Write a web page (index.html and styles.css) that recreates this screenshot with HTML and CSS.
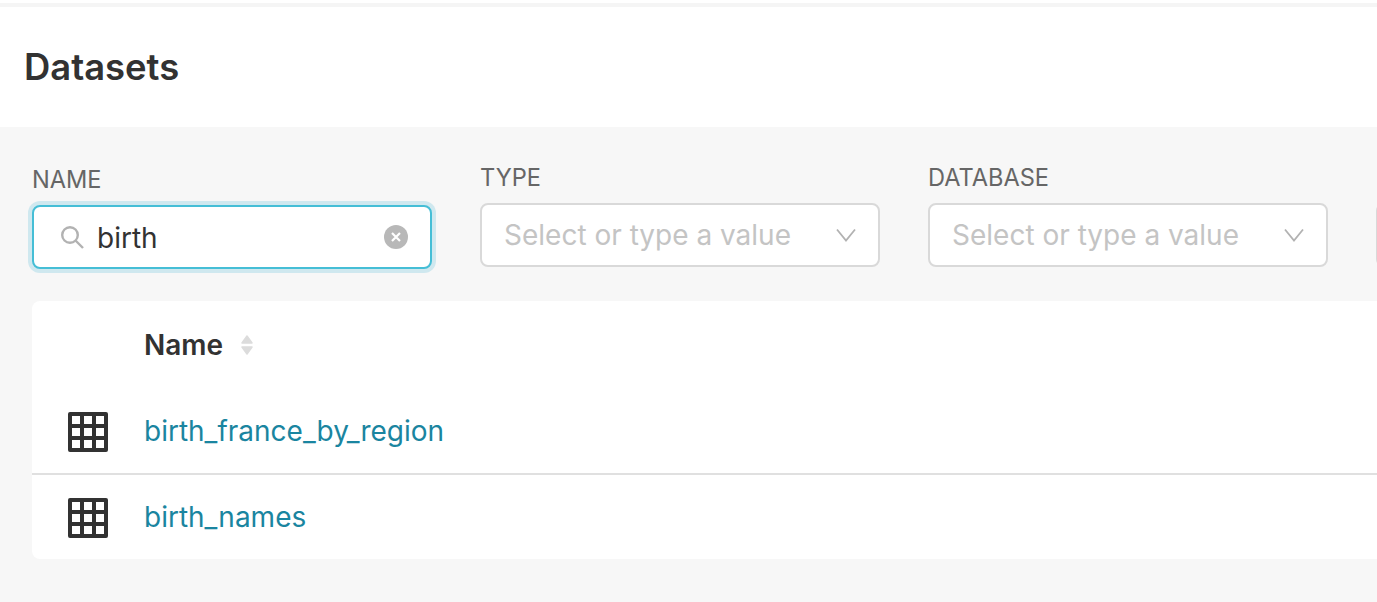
FILE: index.html
```html
<!DOCTYPE html>
<html>
	<head>
		<meta charset="utf-8">
		<title>Datasets</title>
		<link rel="stylesheet" href="styles.css">
	</head>
	<body>
		<div class="top-strip"></div>
		<div class="title-bar">
			<h1>Datasets</h1>
		</div>
		<div class="content">
			<div class="filters">
				<div class="filter filter-name">
					<label>NAME</label>
					<div class="search-box">
						<svg class="search-icon" width="24" height="24" viewBox="0 0 24 24" fill="none" stroke="#b2b2b2" stroke-width="2.4"><circle cx="10" cy="10" r="7.800"/><path d="M15.500 15.500l7.500 7.500"/></svg>
						<span class="search-text">birth</span>
						<svg class="clear-icon" width="24" height="24" viewBox="0 0 24 24"><circle cx="12" cy="12" r="12" fill="#b8b8b8"/><path d="M8 8l8 8M16 8l-8 8" stroke="#fff" stroke-width="2.2"/></svg>
					</div>
				</div>
				<div class="filter">
					<label>TYPE</label>
					<div class="select-box">
						<span class="placeholder">Select or type a value</span>
						<svg width="20" height="14" viewBox="0 0 20 14" fill="none" stroke="#b2b2b2" stroke-width="1.8"><path d="M1 1.500l9 11 9-11"/></svg>
					</div>
				</div>
				<div class="filter">
					<label>DATABASE</label>
					<div class="select-box">
						<span class="placeholder">Select or type a value</span>
						<svg width="20" height="14" viewBox="0 0 20 14" fill="none" stroke="#b2b2b2" stroke-width="1.8"><path d="M1 1.500l9 11 9-11"/></svg>
					</div>
				</div>
				<div class="filter">
					<label>&nbsp;</label>
					<div class="select-box"></div>
				</div>
			</div>
			<div class="table">
				<div class="table-head">
					<span class="col-name">Name</span>
					<svg class="sort-icon" width="12" height="20" viewBox="0 0 12 20" fill="#dcdcdc" stroke="#dcdcdc" stroke-width="1.500" stroke-linejoin="round"><path d="M6 1l5 7H1z"/><path d="M6 19l-5-7h10z"/></svg>
				</div>
				<div class="table-row">
					<svg class="table-icon" width="40" height="40" viewBox="0 0 40 40"><path fill="#323232" fill-rule="evenodd" d="M2 0h36a2 2 0 0 1 2 2v36a2 2 0 0 1-2 2H2a2 2 0 0 1-2-2V2a2 2 0 0 1 2-2zM4 4v8h8V4zM16 4v8h8V4zM28 4v8h8V4zM4 16v8h8v-8zM16 16v8h8v-8zM28 16v8h8v-8zM4 28v8h8v-8zM16 28v8h8v-8zM28 28v8h8v-8z"/></svg>
					<a href="#">birth_france_by_region</a>
				</div>
				<div class="table-row">
					<svg class="table-icon" width="40" height="40" viewBox="0 0 40 40"><path fill="#323232" fill-rule="evenodd" d="M2 0h36a2 2 0 0 1 2 2v36a2 2 0 0 1-2 2H2a2 2 0 0 1-2-2V2a2 2 0 0 1 2-2zM4 4v8h8V4zM16 4v8h8V4zM28 4v8h8V4zM4 16v8h8v-8zM16 16v8h8v-8zM28 16v8h8v-8zM4 28v8h8v-8zM16 28v8h8v-8zM28 28v8h8v-8z"/></svg>
					<a href="#">birth_names</a>
				</div>
			</div>
		</div>
	</body>
</html>
```

FILE: styles.css
```css
html, body {
	margin: 0;
	padding: 0;
	height: 100%;
	overflow: hidden;
}

body {
	background-color: #fff;
	font-family: Inter, "Liberation Sans", sans-serif;
	color: #323232;
}

.top-strip {
	height: 4px;
	margin-top: 3px;
	background-color: #f5f5f5;
}

/* title */
.title-bar {
	height: 120px;
	padding-left: 24px;
	display: flex;
	align-items: center;
	background-color: #fff;
}

.title-bar h1 {
	margin: 0;
	font-size: 36.4px;
	font-weight: 600;
	line-height: 40px;
}

/* filters */
.content {
	height: 475px;
	padding-left: 32px;
	background-color: #f7f7f7;
	overflow: hidden;
}

.filters {
	display: flex;
	gap: 48px;
	padding-top: 36px;
	height: 174px;
	box-sizing: border-box;
}

.filter {
	flex: none;
	width: 400px;
}

.filter label {
	display: block;
	height: 40px;
	font-size: 23.6px;
	line-height: 30px;
	color: #666;
}

.filter-name {
	margin-top: 2px;
}

.search-box {
	display: flex;
	align-items: center;
	box-sizing: border-box;
	width: 400px;
	height: 64px;
	padding: 0 22px 0 26px;
	background-color: #fff;
	border: 2px solid #45bed6;
	border-radius: 8px;
	box-shadow: 0 0 0 4px #cfe8ef;
}

.search-text {
	flex: 1;
	margin: 1px 0 0 13px;
	font-size: 28px;
	color: #323232;
}

.select-box {
	display: flex;
	align-items: center;
	justify-content: space-between;
	box-sizing: border-box;
	width: 400px;
	height: 64px;
	padding: 0 22px 0 22px;
	background-color: #fff;
	border: 2px solid #d9d9d9;
	border-radius: 8px;
}

.placeholder {
	font-size: 28px;
	color: #c4c4c4;
}

/* table */
.table {
	background-color: #fff;
	border-radius: 8px 0 0 8px;
}

.table-head {
	display: flex;
	align-items: center;
	gap: 19px;
	height: 88px;
	padding-left: 112px;
}

.col-name {
	font-size: 28px;
	font-weight: 600;
}

.sort-icon {
	margin-left: -1px;
}

.table-row {
	display: flex;
	align-items: center;
	height: 84px;
	padding-left: 36px;
	box-sizing: border-box;
}

.table-row + .table-row {
	height: 86px;
	border-top: 2px solid #e0e0e0;
}

.table-icon {
	flex: none;
	margin-top: 2px;
	margin-right: 36px;
}

.table-row a {
	font-size: 28px;
	color: #1a85a0;
	text-decoration: none;
}
```
